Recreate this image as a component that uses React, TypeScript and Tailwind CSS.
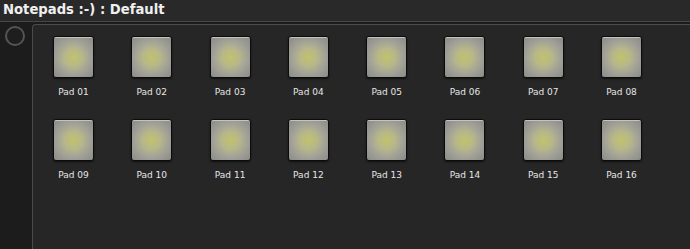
const pads = Array.from({ length: 16 }, (_, i) => `Pad ${String(i + 1).padStart(2, "0")}`);

function Pad({ label }: { label: string }) {
  return (
    <div className="flex flex-col items-center w-[41px]">
      <div className="w-[41px] h-[42px] rounded-[3px] border border-[#0c0c0c] shadow-[0_1px_2px_rgba(0,0,0,0.6)]">
        <div className="w-full h-full rounded-[2px] border-t border-[#c4c4bc] bg-[radial-gradient(circle_at_50%_50%,#c2c26c_0%,#b7b78a_32%,#a1a198_62%,#8b8b88_100%)]" />
      </div>
      <span className="mt-[10px] text-[9px] leading-none text-[#e6e6e6] whitespace-nowrap font-['DejaVu_Sans',sans-serif]">
        {label}
      </span>
    </div>
  );
}

export default function App() {
  return (
    <div className="w-[690px] h-[249px] bg-[#1c1c1c] overflow-hidden flex flex-col font-['DejaVu_Sans',sans-serif]">
      <div className="h-[22px] shrink-0 bg-[#292929] border-b border-[#474747] flex items-start pl-[3px] pt-[1px]">
        <h1 className="text-[13.2px] font-bold leading-[18px] text-[#f0f0f0]">
          Notepads :-) : Default
        </h1>
      </div>
      <div className="flex flex-1 pt-[2px]">
        <div className="w-[32px] shrink-0 flex justify-center pt-[2px] pr-[3px]">
          <div className="w-[20px] h-[20px] rounded-full border-[2.5px] border-[#545454] bg-[#1e1e1e]" />
        </div>
        <div className="flex-1 bg-[#262626] border-l border-t border-[#4c4c4c] rounded-tl-[4px] pl-[20px] pt-[11px]">
          <div className="grid grid-cols-[repeat(8,41px)] gap-x-[37.3px] gap-y-[22px]">
            {pads.map((p) => (
              <Pad key={p} label={p} />
            ))}
          </div>
        </div>
      </div>
    </div>
  );
}
